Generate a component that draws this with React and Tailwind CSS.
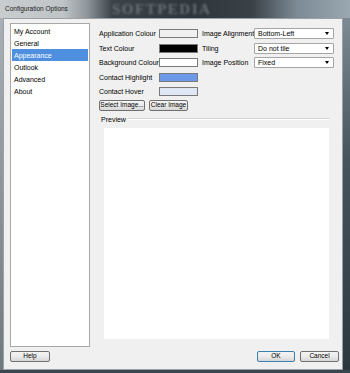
import React from "react";

const font = { fontFamily: '"Liberation Sans", Arial, sans-serif' };

function Swatch({ color }) {
  return <div className={`w-[39px] h-[9px] border border-[#7a7a7a] ${color}`} />;
}

function Combo({ text }) {
  return (
    <div className="w-[80px] h-[11px] border border-[#a5a5a5] bg-white rounded-[1px] flex items-center justify-between pl-[3px] pr-[4px]">
      <span className="text-[7px] leading-none text-black whitespace-nowrap">{text}</span>
      <span className="w-0 h-0 border-l-[2.5px] border-r-[2.5px] border-t-[3px] border-l-transparent border-r-transparent border-t-black" />
    </div>
  );
}

function Btn({ children, w, def }) {
  return (
    <div
      className={`${w} h-[11px] rounded-[2px] border ${def ? "border-[#3c7fb1]" : "border-[#707070]"} bg-gradient-to-b from-[#f4f4f4] via-[#ebebeb] to-[#d6d6d6] flex items-center justify-center text-[6.5px] leading-none text-black whitespace-nowrap overflow-hidden`}
    >
      {children}
    </div>
  );
}

export default function App() {
  const items = ["My Account", "General", "Appearance", "Outlook", "Advanced", "About"];
  return (
    <div style={font} className="w-[350px] h-[373px] flex flex-col overflow-hidden bg-[#39444b]">
      {/* title bar */}
      <div className="relative h-[18px] shrink-0 bg-[linear-gradient(to_right,#c9cdd0_0%,#bfc4c7_18%,#8e959a_25%,#3b4248_32%,#2e353b_55%,#3a4248_72%,#7d8b96_85%,#9aa8b2_100%)] flex items-center pl-[5px]">
        <span className="text-[6.5px] text-[#1a1a1a] leading-none relative z-10 whitespace-nowrap">Configuration Options</span>
        <span
          className="absolute left-[112px] top-[2px] text-[15px] font-bold tracking-[1.5px] text-[#7d858a] opacity-70 blur-[0.8px] leading-none"
          style={{ fontFamily: '"Liberation Serif", serif' }}
        >
          SOFTPEDIA
        </span>
      </div>
      <div className="flex flex-1 min-h-0">
        {/* left frame */}
        <div className="w-[3px] bg-gradient-to-b from-[#a9b0b5] to-[#6f7a80]" />
        {/* client */}
        <div className="w-[340px] bg-[#f0f0f0] border border-[#9aa0a4] flex flex-col pl-[6px] pr-[3px] pt-[4px]">
          <div className="flex h-[324px]">
            {/* list */}
            <div className="w-[80px] h-full bg-white border border-[#a8a8a8] flex flex-col pt-[1px] px-[1px]">
              {items.map((it) => (
                <div
                  key={it}
                  className={`h-[12px] flex items-center pl-[2px] text-[7px] leading-none whitespace-nowrap ${
                    it === "Appearance" ? "bg-[#4f8fe0] text-white" : "text-black"
                  }`}
                >
                  {it}
                </div>
              ))}
            </div>
            {/* content */}
            <div className="flex-1 pl-[9px] pt-[5px] flex flex-col">
              <div className="flex">
                <div className="flex flex-col gap-[3.5px]">
                  {[
                    ["Application Colour", "bg-[#f0f0f0]"],
                    ["Text Colour", "bg-black"],
                    ["Background Colour", "bg-white"],
                    ["Contact Highlight", "bg-[#6c9ae8]"],
                    ["Contact Hover", "bg-[#dfe7f4]"],
                  ].map(([l, c]) => (
                    <div key={l} className="h-[11px] flex items-center">
                      <span className="w-[60px] text-[7px] leading-none text-black whitespace-nowrap">{l}</span>
                      <Swatch color={c} />
                    </div>
                  ))}
                </div>
                <div className="flex flex-col gap-[3.5px] pl-[4px]">
                  {[
                    ["Image Alignment", "Bottom-Left"],
                    ["Tiling", "Do not tile"],
                    ["Image Position", "Fixed"],
                  ].map(([l, v]) => (
                    <div key={l} className="h-[11px] flex items-center">
                      <span className="w-[52px] text-[7px] leading-none text-black whitespace-nowrap">{l}</span>
                      <Combo text={v} />
                    </div>
                  ))}
                </div>
              </div>
              <div className="flex gap-[4px] mt-[3px]">
                <Btn w="w-[46px]">Select Image...</Btn>
                <Btn w="w-[39px]">Clear Image</Btn>
              </div>
              {/* preview group */}
              <div className="flex items-center mt-[3px] h-[10px] pl-[2px] pr-[9px]">
                <span className="text-[7px] leading-none text-black">Preview</span>
                <div className="flex-1 ml-[2px] h-[2px] border-t border-[#d5d5d5] border-b border-b-white" />
              </div>
              <div className="ml-[5px] mt-[4px] w-[225px] h-[211px] bg-white" />
            </div>
          </div>
          <div className="flex items-center mt-[4px]">
            <Btn w="w-[40px]">Help</Btn>
            <div className="flex-1" />
            <Btn w="w-[38px]" def>
              OK
            </Btn>
            <div className="w-[5px]" />
            <Btn w="w-[39px]">Cancel</Btn>
          </div>
        </div>
        {/* right frame */}
        <div className="w-[7px] bg-[linear-gradient(to_bottom,#7c8a94,#46545d_40%,#2c383f)]" />
      </div>
      <div className="h-[3px] bg-[#3a464d]" />
    </div>
  );
}
